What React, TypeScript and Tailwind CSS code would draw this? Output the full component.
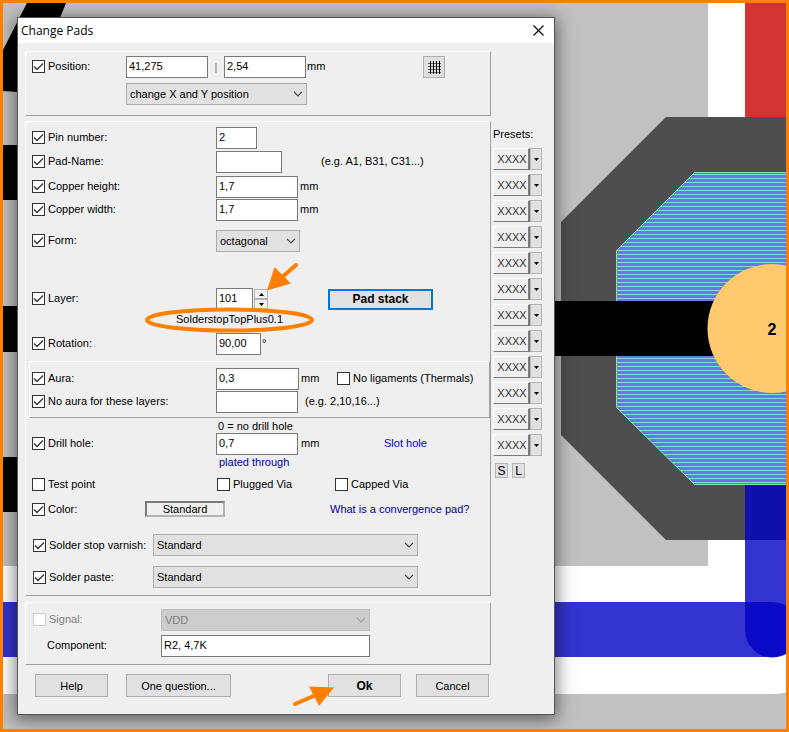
import type { ReactNode } from "react";
import clsx from "clsx";

const PRESET_COUNT = 12;

// one copper hatch line every 4 units between the pad's top and bottom edge
const HATCH_LINES = Array.from({ length: 78 }, (_, i) => 174 + i * 4);

/** Check — classic 13px tick box with its caption. */
function Check({
  label,
  checked = false,
  disabled = false,
  className,
}: {
  label: string;
  checked?: boolean;
  disabled?: boolean;
  className?: string;
}) {
  return (
    <label
      className={clsx(
        "flex shrink-0 items-center gap-[3px] whitespace-nowrap",
        disabled && "text-[#7c7c7c]",
        className,
      )}
    >
      <span className="grid h-[13px] w-[13px] shrink-0">
        <input
          type="checkbox"
          defaultChecked={checked}
          disabled={disabled}
          className="peer col-start-1 row-start-1 h-[13px] w-[13px] appearance-none border border-[#333333] bg-white disabled:border-[#cccccc]"
        />
        <svg
          viewBox="0 0 13 13"
          className="pointer-events-none invisible col-start-1 row-start-1 h-[13px] w-[13px] peer-checked:visible"
          aria-hidden
        >
          <path d="M2 6.5 5 9.500 11 3.500" fill="none" stroke="#333" strokeWidth="1.3" />
        </svg>
      </span>
      {label}
    </label>
  );
}

function Field({
  label,
  value = "",
  className,
}: {
  label: string;
  value?: string;
  className: string;
}) {
  return (
    <input
      type="text"
      aria-label={label}
      defaultValue={value}
      className={clsx(
        "h-[22px] shrink-0 border border-[#7a7a7a] bg-white pb-[2px] pl-[2px] outline-none",
        className,
      )}
    />
  );
}

function Dropdown({
  label,
  value,
  disabled = false,
  className,
}: {
  label: string;
  value: string;
  disabled?: boolean;
  className: string;
}) {
  return (
    <div className={clsx("grid h-[22px] shrink-0", className)}>
      <select
        aria-label={label}
        defaultValue={value}
        disabled={disabled}
        className="col-start-1 row-start-1 h-[22px] w-full appearance-none border border-[#acacac] bg-[#e1e1e1] pl-[3px] outline-none disabled:border-[#bfbfbf] disabled:bg-[#cccccc] disabled:text-[#7c7c7c] disabled:opacity-100"
      >
        <option>{value}</option>
      </select>
      <svg
        viewBox="0 0 10 6"
        className={clsx(
          "pointer-events-none col-start-1 row-start-1 mr-[4px] h-[6px] w-[10px] self-center justify-self-end",
          disabled ? "text-[#a0a0a0]" : "text-[#444444]",
        )}
        aria-hidden
      >
        <path d="M1 .8 5 4.8 9 .8" fill="none" stroke="currentColor" strokeWidth="1.2" />
      </svg>
    </div>
  );
}

function Group({ children, className }: { children: ReactNode; className?: string }) {
  return (
    <section
      className={clsx(
        "border border-t-white border-r-[#a0a0a0] border-b-[#a0a0a0] border-l-white",
        className,
      )}
    >
      {children}
    </section>
  );
}

function Row({ children, className = "pl-[6px]" }: { children: ReactNode; className?: string }) {
  return <div className={clsx("flex h-[22px] items-center", className)}>{children}</div>;
}

function PushButton({ children, className }: { children: ReactNode; className?: string }) {
  return (
    <button
      type="button"
      className={clsx(
        "h-[23px] shrink-0 border border-[#adadad] bg-[#e1e1e1] whitespace-nowrap",
        className,
      )}
    >
      {children}
    </button>
  );
}

function Preset({ index }: { index: number }) {
  return (
    <div className="flex h-[22px]">
      <button
        type="button"
        className="w-[37px] border border-t-white border-r-2 border-r-[#7a7a7a] border-b-[#7a7a7a] border-l-white pl-[2px] text-[#333333]"
      >
        XXXX
      </button>
      <button
        type="button"
        aria-label={`Preset ${index} menu`}
        className="flex w-[12px] items-center justify-center border border-[#b4b4b4] bg-[#e1e1e1]"
      >
        <svg viewBox="0 0 5 3" className="h-[3px] w-[5px]" aria-hidden>
          <path d="M0 0h5L2.500 3z" />
        </svg>
      </button>
    </div>
  );
}

/** Board — the layout canvas behind the dialog: copper, tracks and one pad. */
function Board() {
  return (
    <svg
      viewBox="3 3 783 726"
      preserveAspectRatio="xMinYMin slice"
      className="absolute inset-0 h-full w-full"
      aria-hidden
    >
      <defs>
        <clipPath id="pad">
          <path d="M694.500 172.500H850V484.500H694.500L616.500 407.500V250.500z" />
        </clipPath>
      </defs>
      <rect x="3" y="3" width="783" height="726" fill="#c1c1c1" />
      <path d="M3 566H708V3H836V630A64 64 0 0 1 772 694H3z" fill="#fff" />
      <path d="M27 3H66L30 92H18L3 91V50z" />
      <path d="M3 145H40V200H3zM3 306H40V352H3zM3 457H40V512H3z" />
      <rect x="745" y="3" width="55" height="120" fill="#d33333" />
      <path d="M666 117H877V540H666L561 435V222z" fill="#4e4e4e" />
      <path d="M3 602H772A27.500 27.500 0 0 1 772 657H3z" fill="#0000c4" fillOpacity=".8" />
      <path d="M745 485H800V630A27.500 27.500 0 0 1 745 630z" fill="#0000c4" fillOpacity=".8" />
      <g clipPath="url(#pad)" shapeRendering="crispEdges">
        <rect x="616" y="172" width="240" height="314" fill="#6478e8" />
        {HATCH_LINES.map((y) => (
          <rect key={y} x="616" y={y} width="240" height="1" fill="#84dcd8" />
        ))}
      </g>
      <path
        d="M694.500 172.500H850V484.500H694.500L616.500 407.500V250.500z"
        fill="none"
        stroke="#80e8a4"
      />
      <rect x="540" y="301" width="232" height="55" />
      <circle cx="772" cy="328.500" r="64.500" fill="#ffc96e" />
      <text
        x="772"
        y="335"
        textAnchor="middle"
        className="font-['Liberation_Sans',Arial,sans-serif] text-[16px] font-bold"
      >
        2
      </text>
    </svg>
  );
}

/** Callouts — orange arrows and ring drawn over the dialog. */
function Callouts() {
  return (
    <svg
      viewBox="18 18 536 696"
      preserveAspectRatio="xMinYMin meet"
      className="pointer-events-none absolute inset-0 h-full w-full"
      aria-hidden
    >
      <g fill="none" stroke="#ff8000" strokeWidth="4" strokeLinecap="round">
        <ellipse cx="229.500" cy="320" rx="82.500" ry="10.500" />
        <path d="M296 265 280 279M295 704 316 695" />
      </g>
      <path
        d="M267 290.500 274.500 267 291 283.500zM334 687.500 309 686.500 319 706z"
        fill="#ff8000"
      />
    </svg>
  );
}

export default function App() {
  return (
    <main className="relative min-h-screen overflow-hidden border-[3px] border-[#ff8000] p-[14px] font-['Liberation_Sans',Arial,sans-serif] text-[11px] leading-[14px] text-black">
      <Board />

      <div
        role="dialog"
        aria-labelledby="dialog-title"
        className="relative w-full max-w-[538px] border border-[#555555] bg-[#efefef] shadow-[0_3px_16px_2px_rgba(0,0,0,0.5)]"
      >
        <header className="flex h-[25px] items-center justify-between bg-white pr-[10px] pl-[3px]">
          <h1 id="dialog-title" className="font-['Open_Sans','Noto_Sans',sans-serif] text-[12px]">
            Change Pads
          </h1>
          <button type="button" aria-label="Close">
            <svg viewBox="0 0 11 11" className="h-[11px] w-[11px]" aria-hidden>
              <path d="M.5.5 10.500 10.500M10.500.5.5 10.500" stroke="#000" strokeWidth="1.1" />
            </svg>
          </button>
        </header>

        <div className="flex gap-[2px] pt-[8px] pb-[17px] pl-[7px]">
          <div className="w-[466px] shrink-0">
            <Group className="pt-[4px] pb-[10px]">
              <Row>
                <Check label="Position:" checked className="mb-[2px] w-[94px]" />
                <Field label="X position" value="41,275" className="w-[82px]" />
                <span className="w-[16px] text-center text-[#777777]">|</span>
                <Field label="Y position" value="2,54" className="w-[82px]" />
                <span className="mb-[2px] ml-[1px] w-[116px]">mm</span>
                <button
                  type="button"
                  aria-label="Grid"
                  className="flex h-[22px] w-[22px] items-center justify-center border border-[#adadad] bg-[#e1e1e1]"
                >
                  <svg viewBox="0 0 14 14" className="h-[14px] w-[14px]" aria-hidden>
                    <path d="M1 3.500H14M1 6.500H14M1 9.500H14M1 12.500H14" stroke="#666" />
                    <path d="M3.500 1V14M6.500 1V14M9.500 1V14M12.500 1V14" stroke="#000" />
                  </svg>
                </button>
              </Row>
              <Row className="mt-[5px] pl-[100px]">
                <Dropdown label="Position mode" value="change X and Y position" className="w-[181px]" />
              </Row>
            </Group>

            <Group className="mt-[5px] pt-[5px] pb-[7px]">
              <Row>
                <Check label="Pin number:" checked className="mb-[2px] w-[184px]" />
                <Field label="Pin number" value="2" className="w-[41px]" />
              </Row>
              <Row className="mt-[2px] pl-[6px]">
                <Check label="Pad-Name:" checked className="mb-[2px] w-[184px]" />
                <Field label="Pad name" className="w-[66px]" />
                <span className="mb-[2px] ml-[39px]">(e.g. A1, B31, C31...)</span>
              </Row>
              <Row className="mt-[3px] pl-[6px]">
                <Check label="Copper height:" checked className="mb-[2px] w-[184px]" />
                <Field label="Copper height" value="1,7" className="w-[82px]" />
                <span className="mb-[2px] ml-[2px]">mm</span>
              </Row>
              <Row className="mt-[1px] pl-[6px]">
                <Check label="Copper width:" checked className="mb-[2px] w-[184px]" />
                <Field label="Copper width" value="1,7" className="w-[82px]" />
                <span className="mb-[2px] ml-[2px]">mm</span>
              </Row>
              <Row className="mt-[9px] pl-[6px]">
                <Check label="Form:" checked className="mb-[2px] w-[184px]" />
                <Dropdown label="Form" value="octagonal" className="w-[84px]" />
              </Row>

              <Row className="mt-[36px] pl-[6px]">
                <Check label="Layer:" checked className="mb-[2px] w-[184px]" />
                <Field label="Layer" value="101" className="w-[37px]" />
                <div className="ml-[1px] flex w-[14px] flex-col">
                  <button
                    type="button"
                    aria-label="Layer up"
                    className="flex h-[10px] items-center justify-center border border-[#b4b4b4] bg-[#efefef]"
                  >
                    <svg viewBox="0 0 5 3" className="h-[3px] w-[5px]" aria-hidden>
                      <path d="M0 3h5L2.500 0z" />
                    </svg>
                  </button>
                  <button
                    type="button"
                    aria-label="Layer down"
                    className="flex h-[10px] items-center justify-center border border-[#b4b4b4] bg-[#efefef]"
                  >
                    <svg viewBox="0 0 5 3" className="h-[3px] w-[5px]" aria-hidden>
                      <path d="M0 0h5L2.500 3z" />
                    </svg>
                  </button>
                </div>
                <button
                  type="button"
                  className="ml-[60px] h-[21px] w-[105px] border-2 border-[#0078d7] bg-[#e1e1e1] text-[12px] font-bold"
                >
                  Pad stack
                </button>
              </Row>
              <p className="mt-[2px] pl-[150px]">SolderstopTopPlus0.1</p>
              <Row className="mt-[7px] pl-[6px]">
                <Check label="Rotation:" checked className="mb-[2px] w-[184px]" />
                <Field label="Rotation" value="90,00" className="w-[45px]" />
                <span className="mb-[2px] ml-[1px]">°</span>
              </Row>

              <Group className="mt-[6px] ml-[3px] pt-[6px] pb-[4px]">
                <Row className="pl-[2px]">
                  <Check label="Aura:" checked className="mb-[2px] w-[184px]" />
                  <Field label="Aura" value="0,3" className="w-[83px]" />
                  <span className="mb-[2px] ml-[2px] w-[36px]">mm</span>
                  <Check label="No ligaments (Thermals)" className="mb-[2px]" />
                </Row>
                <Row className="mt-[1px] pl-[2px]">
                  <Check
                    label="No aura for these layers:"
                    checked
                    className="mb-[2px] w-[184px]"
                  />
                  <Field label="Layers without aura" className="w-[82px]" />
                  <span className="mb-[2px] ml-[7px]">(e.g. 2,10,16...)</span>
                </Row>
              </Group>

              <p className="mt-[2px] pl-[192px] leading-[13px]">0 = no drill hole</p>
              <Row>
                <Check label="Drill hole:" checked className="mb-[2px] w-[184px]" />
                <Field label="Drill hole" value="0,7" className="w-[82px]" />
                <span className="mb-[2px] ml-[3px] w-[83px]">mm</span>
                <a href="#slot-hole" className="mb-[2px] text-[#0000dd]">
                  Slot hole
                </a>
              </Row>
              <p className="pl-[193px]">
                <a href="#plated" className="text-[#0000aa]">
                  plated through
                </a>
              </p>

              <Row className="mt-[4px] pl-[6px]">
                <Check label="Test point" className="w-[185px]" />
                <Check label="Plugged Via" className="w-[118px]" />
                <Check label="Capped Via" />
              </Row>
              <Row className="mt-[3px] pl-[6px]">
                <Check label="Color:" checked className="w-[113px]" />
                <button
                  type="button"
                  className="h-[16px] w-[80px] border-2 border-t-[#7a7a7a] border-r-[#b4b4b4] border-b-[#b4b4b4] border-l-[#7a7a7a] leading-[12px]"
                >
                  Standard
                </button>
                <a href="#convergence-pad" className="ml-[105px] text-[#0000aa]">
                  What is a convergence pad?
                </a>
              </Row>

              <Row className="mt-[14px] pl-[7px]">
                <Check label="Solder stop varnish:" checked className="w-[120px]" />
                <Dropdown label="Solder stop varnish" value="Standard" className="w-[265px]" />
              </Row>
              <Row className="mt-[10px] pl-[7px]">
                <Check label="Solder paste:" checked className="w-[120px]" />
                <Dropdown label="Solder paste" value="Standard" className="w-[265px]" />
              </Row>
            </Group>

            <Group className="mt-[6px] pt-[6px] pb-[7px]">
              <Row className="pl-[7px]">
                <Check label="Signal:" disabled className="mb-[2px] w-[128px]" />
                <Dropdown label="Signal" value="VDD" disabled className="w-[209px]" />
              </Row>
              <Row className="mt-[4px] pl-[21px]">
                <span className="mb-[2px] w-[114px]">Component:</span>
                <Field label="Component" value="R2, 4,7K" className="w-[209px]" />
              </Row>
            </Group>

            <footer className="mt-[9px] flex pl-[10px]">
              <PushButton className="w-[73px]">Help</PushButton>
              <PushButton className="ml-[18px] w-[105px]">One question...</PushButton>
              <PushButton className="ml-[97px] w-[73px] text-[12px] font-bold">Ok</PushButton>
              <PushButton className="ml-[15px] w-[73px]">Cancel</PushButton>
            </footer>
          </div>

          <aside className="flex flex-col pt-[76px]">
            <p className="mb-[7px]">Presets:</p>
            <div className="flex flex-col gap-[4px]">
              {Array.from({ length: PRESET_COUNT }, (_, i) => (
                <Preset key={i} index={i + 1} />
              ))}
            </div>
            <div className="mt-[7px] flex gap-[4px] pl-[2px] text-[12px]">
              <button type="button" className="h-[15px] w-[13px] border border-[#b4b4b4] bg-[#e1e1e1]">
                S
              </button>
              <button type="button" className="h-[15px] w-[13px] border border-[#b4b4b4] bg-[#e1e1e1]">
                L
              </button>
            </div>
          </aside>
        </div>

        <Callouts />
      </div>
    </main>
  );
}
